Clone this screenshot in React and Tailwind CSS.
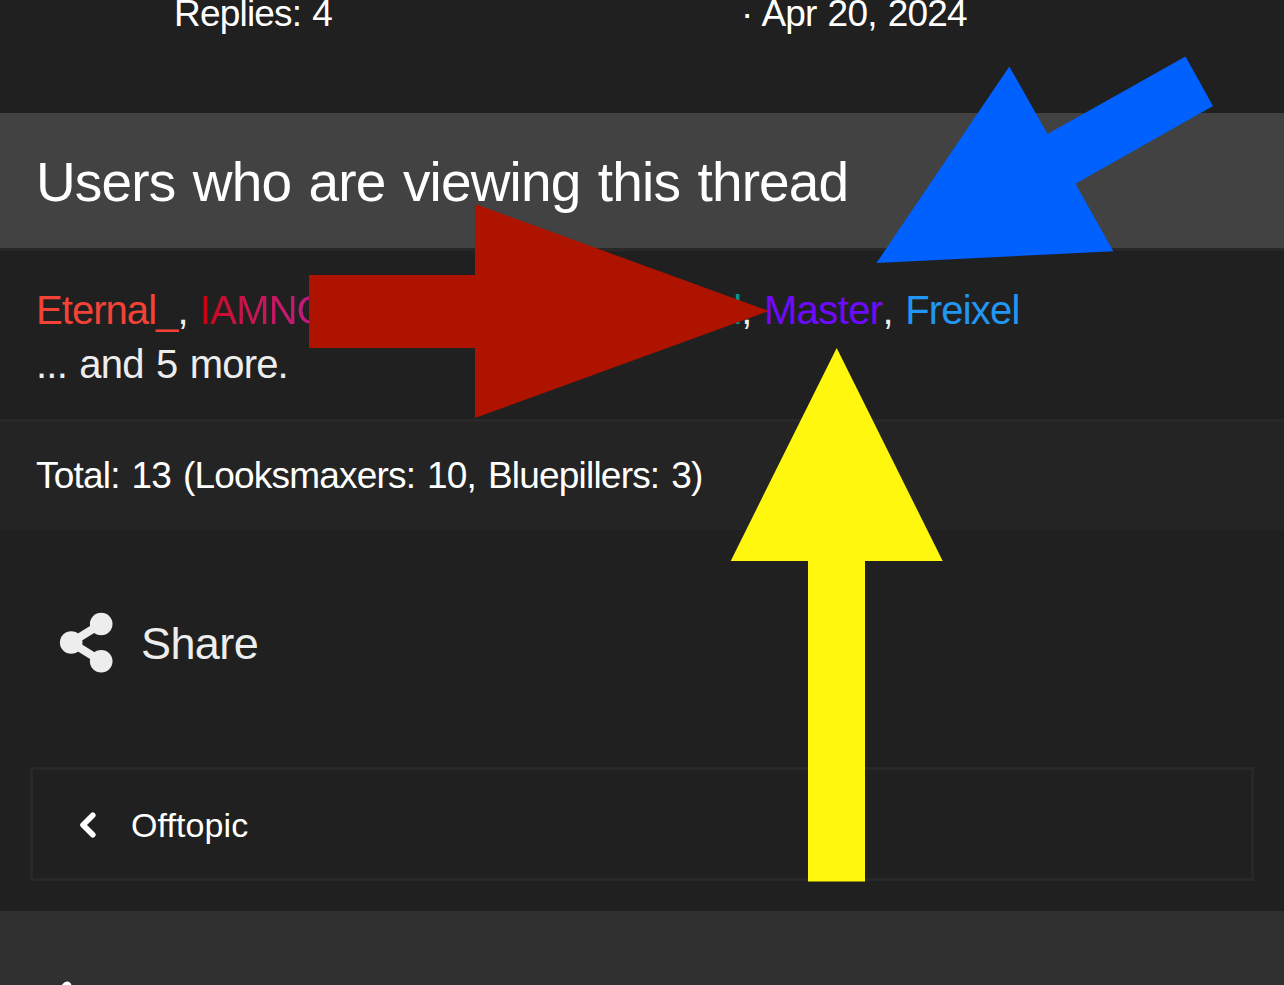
const viewers = [
  { name: 'Eternal_', className: 'tracking-[-0.95px] text-[#f44336]' },
  { name: 'IAMNO', className: 'bg-linear-to-r from-[#cc0000] to-[#c0148c] bg-clip-text text-transparent' },
  { name: 'l', className: 'ml-[406px] text-[#009688]' },
  { name: 'Master', className: 'tracking-[-0.6px] text-[#6f0aff]' },
  { name: 'Freixel', className: 'text-[#2196f3]' },
]

function ShareIcon() {
  return (
    <svg width="54" height="62" viewBox="0 0 54 62" fill="#ededed" stroke="#ededed">
      <path d="M42 12 L12 30.5 L42 49" fill="none" strokeWidth="8" />
      <circle cx="42.2" cy="12" r="11.3" stroke="none" />
      <circle cx="12.2" cy="30.5" r="11.3" stroke="none" />
      <circle cx="42.2" cy="49.3" r="11.3" stroke="none" />
    </svg>
  )
}

function Arrows() {
  return (
    <svg className="pointer-events-none absolute inset-0" width="1284" height="985" viewBox="0 0 1284 985">
      <polygon fill="#ae1300" points="309,275 475,275 475,204 769,311 475,418 475,348 309,348" />
      <polygon fill="#0061ff" points="876.5,263 1009.3,66.5 1047.5,134 1185.5,56.5 1213,106 1075.5,183.7 1113.3,251.3" />
      <polygon fill="#fff70d" points="836.7,348 942.7,561 865,561 865,881.5 808,881.5 808,561 730.7,561" />
    </svg>
  )
}

export default function App() {
  return (
    <div className="relative flex h-[985px] w-[1284px] flex-col overflow-hidden bg-[#202020] text-white [font-family:'Liberation_Sans',Arial,sans-serif]">
      <div className="flex h-[113px] pl-[174px] text-[37px] leading-[28px] tracking-[-0.8px] [word-spacing:1.5px]">
        <span className="w-[567px]">Replies: 4</span>
        <span>· Apr 20, 2024</span>
      </div>

      <section>
        <h3 className="h-[135px] bg-[#424242] pl-[36px] text-[55px] leading-[138px] tracking-[-0.85px] [word-spacing:3px]">
          Users who are viewing this thread
        </h3>
        <div className="h-[171px] border-t-[3px] border-[#282828] pt-[32px] pl-[36px] text-[40px] leading-[54px] tracking-[-0.8px] text-[#ededed] [word-spacing:2px]">
          <div className="flex whitespace-pre">
            {viewers.map((v, i) => (
              <span key={v.name}>
                <span className={`inline-block ${v.className}`}>{v.name}</span>
                {i !== viewers.length - 1 && i !== 1 && ', '}
              </span>
            ))}
          </div>
          <div>... and 5 more.</div>
        </div>
        <div className="h-[111px] border-t-[3px] border-[#282828] bg-[#242424] pl-[36px] text-[37px] leading-[108px] tracking-[-0.8px] [word-spacing:2.4px]">
          Total: 13 (Looksmaxers: 10, Bluepillers: 3)
        </div>
      </section>

      <div className="flex h-[237px] items-start pt-[82px] pl-[59px] text-[#ededed]">
        <ShareIcon />
        <span className="ml-[28px] text-[45px] leading-[64px] tracking-[-0.6px]">Share</span>
      </div>

      <a className="mx-[30px] flex h-[114px] items-center border-[3px] border-[#282828] pt-[2px] pl-[46px]">
        <svg width="18" height="28" viewBox="0 0 18 28" fill="none" stroke="#fff" strokeWidth="5.6">
          <path d="M13.8 4.2 L4 14 L13.8 23.8" strokeLinecap="round" strokeLinejoin="round" />
        </svg>
        <span className="ml-[34px] text-[34px] tracking-[0.1px]">Offtopic</span>
      </a>

      <footer className="mt-[30px] flex-1 overflow-hidden bg-[#303030] pt-[68px] pl-[56px]">
        <svg width="22" height="28" viewBox="0 0 22 28" fill="none" stroke="#fff" strokeWidth="9" strokeLinecap="round">
          <path d="M11 7 L2.5 16" />
        </svg>
      </footer>

      <Arrows />
    </div>
  )
}
